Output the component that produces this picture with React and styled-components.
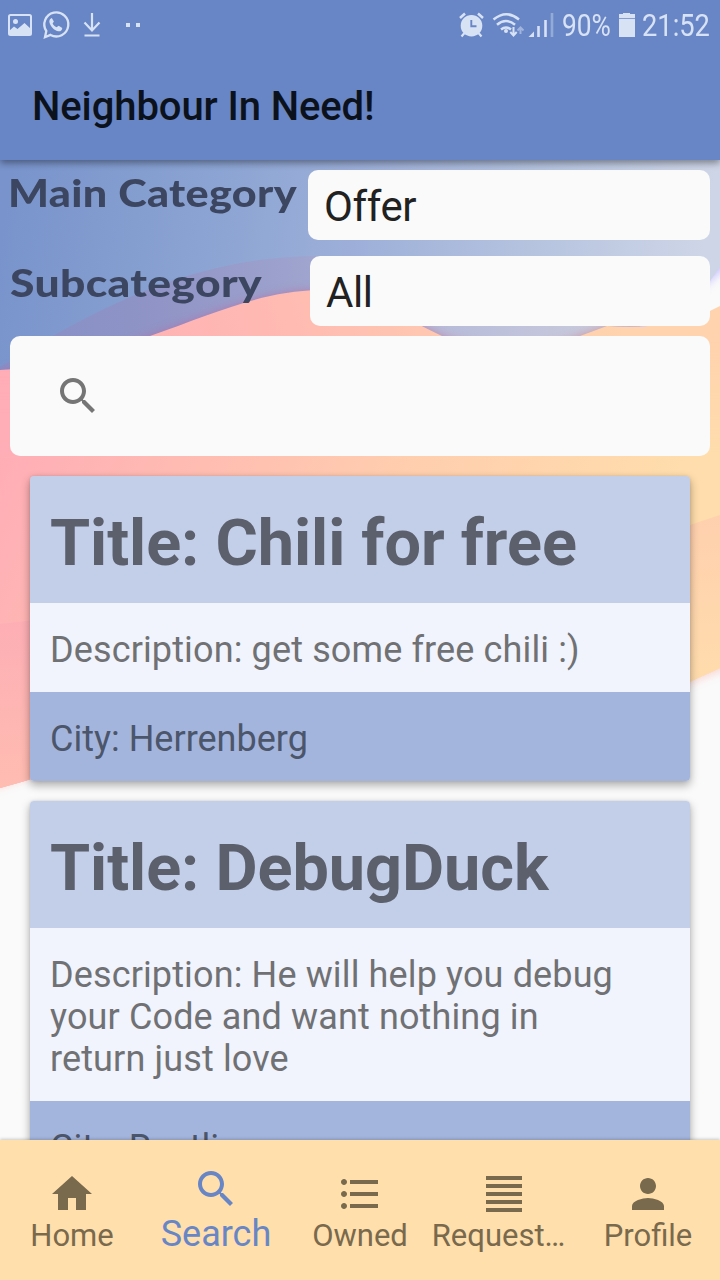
import React from 'react';
import styled, { createGlobalStyle } from 'styled-components';

const GlobalStyle = createGlobalStyle`
  * { box-sizing: border-box; }
  body { margin: 0; background: #fafafa; }
`;

const Screen = styled.div`
  width: 720px;
  height: 1280px;
  display: flex;
  flex-direction: column;
  overflow: hidden;
  background: #fafafa;
  font-family: Roboto, 'Noto Sans', sans-serif;
`;

const Header = styled.header`
  position: relative;
  z-index: 2;
  flex: none;
  height: 160px;
  background: #6886c5;
  box-shadow: 0 3px 7px rgba(0, 0, 0, 0.4);
`;

const StatusBar = styled.div`
  height: 50px;
  padding: 0 10px 0 6px;
  display: flex;
  justify-content: space-between;
  color: #d8e2f5;
`;

const StatusGroup = styled.div`
  display: flex;
  align-items: center;
`;

const StatusIcon = styled.svg`
  display: block;
  flex: none;
  width: ${(p) => p.$w}px;
  height: 50px;
`;

const StatusText = styled.span`
  width: ${(p) => p.$w}px;
  margin-left: ${(p) => p.$gap}px;
  padding-top: 2px;
  font-size: 31px;
  line-height: 52px;
  white-space: nowrap;

  span {
    display: inline-block;
    transform: scaleX(${(p) => p.$scale});
    transform-origin: left;
  }
`;

const AppTitle = styled.h1`
  margin: 0;
  padding: 27px 32px 0;
  font-size: 40px;
  line-height: 60px;
  font-weight: 500;
  letter-spacing: -0.1px;
  color: #0c121c;
`;

const Content = styled.main`
  position: relative;
  flex: none;
  height: 980px;
  overflow: hidden;
  padding-top: 10px;
`;

const Backdrop = styled.svg`
  position: absolute;
  inset: 0;
  width: 720px;
  height: 980px;
`;

const Filters = styled.div`
  position: relative;
  padding: 0 10px;
`;

const FilterRow = styled.div`
  display: flex;
  justify-content: space-between;
  height: 70px;
  margin-bottom: ${(p) => p.$after}px;
`;

const FilterLabel = styled.label`
  margin-left: ${(p) => p.$shift || 0}px;
  padding-top: ${(p) => p.$top}px;
  font-family: Lato, sans-serif;
  font-size: 37px;
  line-height: 44px;
  font-weight: 900;
  letter-spacing: 0.3px;
  white-space: nowrap;
  color: #3c4660;
  transform: scaleX(${(p) => p.$stretch});
  transform-origin: left;
`;

const Select = styled.div`
  flex: none;
  width: ${(p) => p.$w}px;
  height: 70px;
  padding: 0 16px;
  border-radius: 10px;
  background: #fafafa;
  font-size: 42px;
  line-height: 73px;
  letter-spacing: -0.4px;
  color: #212121;
`;

const SearchBox = styled.div`
  height: 120px;
  padding: 36px 44px;
  border-radius: 10px;
  background: #fafafa;
  color: #757575;
`;

const Icon = styled.svg`
  display: block;
  width: 48px;
  height: 48px;
  fill: currentColor;
`;

const CardList = styled.div`
  position: relative;
  display: flex;
  flex-direction: column;
  gap: 20px;
  padding: 20px 30px;
`;

const Card = styled.article`
  border-radius: 4px;
  box-shadow: 0 4px 10px rgba(0, 0, 0, 0.33), 0 0 3px rgba(0, 0, 0, 0.1);
`;

const CardTitle = styled.h2`
  margin: 0;
  height: 127px;
  padding: 16px 20px 0;
  border-radius: 4px 4px 0 0;
  background: #c3cee8;
  font-size: 64.8px;
  line-height: 103px;
  font-weight: 700;
  letter-spacing: -0.05px;
  white-space: nowrap;
  color: #5b606c;
`;

const CardText = styled.p`
  margin: 0;
  padding: 26px 60px 21px 20px;
  border-radius: ${(p) => (p.$city ? '0 0 4px 4px' : '0')};
  background: ${(p) => (p.$city ? '#a4b5dd' : '#f1f4fc')};
  font-size: 36px;
  line-height: 42px;
  letter-spacing: ${(p) => (p.$city ? 0 : 0.13)}px;
  color: ${(p) => (p.$city ? '#4c566b' : '#707174')};
`;

const TabBar = styled.nav`
  position: relative;
  z-index: 2;
  flex: none;
  display: grid;
  grid-template-columns: repeat(5, 144px);
  height: 140px;
  background: #ffdfac;
  box-shadow: 0 -1px 3px rgba(0, 0, 0, 0.2);
`;

const Tab = styled.a`
  display: flex;
  flex-direction: column;
  align-items: center;
  padding-top: ${(p) => (p.$active ? 25 : 30)}px;
  color: ${(p) => (p.$active ? '#6886c5' : '#79694d')};
`;

const TabLabel = styled.span`
  margin-top: ${(p) => (p.$active ? 3 : 0)}px;
  padding-right: ${(p) => p.$nudge || 0}px;
  font-size: ${(p) => (p.$active ? 36 : 31)}px;
  line-height: 36px;
  white-space: nowrap;
`;

const paths = {
  home: 'M10 20v-6h4v6h5v-8h3L12 3 2 12h3v8z',
  search:
    'M15.5 14h-.79l-.28-.27C15.41 12.59 16 11.11 16 9.5 16 5.91 13.09 3 9.5 3S3 5.91 3 9.5 5.91 16 9.5 16c1.61 0 3.09-.59 4.23-1.57l.27.28v.79l5 4.99L20.49 19l-4.99-5zm-6 0C7.01 14 5 11.99 5 9.5S7.01 5 9.5 5 14 7.01 14 9.5 11.99 14 9.5 14z',
  list: 'M4 10.5c-.83 0-1.5.67-1.5 1.5s.67 1.5 1.5 1.5 1.5-.67 1.5-1.5-.67-1.5-1.5-1.5zm0-6c-.83 0-1.5.67-1.5 1.5S3.17 7.5 4 7.5 5.5 6.83 5.5 6 4.83 4.5 4 4.5zm0 12c-.83 0-1.5.68-1.5 1.5s.68 1.5 1.5 1.5 1.5-.68 1.5-1.5-.67-1.5-1.5-1.5zM7 19h14v-2H7v2zm0-6h14v-2H7v2zm0-8v2h14V5H7z',
  lines: 'M3 21h18v-2H3v2zm0-4h18v-2H3v2zm0-4h18v-2H3v2zm0-4h18V7H3v2zm0-6v2h18V3H3z',
  person:
    'M12 12c2.21 0 4-1.79 4-4s-1.79-4-4-4-4 1.79-4 4 1.79 4 4 4zm0 2c-2.67 0-8 1.34-8 4v2h16v-2c0-2.66-5.33-4-8-4z',
};

const Glyph = ({ name }) => (
  <Icon viewBox="0 0 24 24">
    <path d={paths[name]} />
  </Icon>
);

const Notifications = () => (
  <StatusIcon $w={140} viewBox="6 0 140 50" fill="none" stroke="currentColor">
    <rect x="9" y="15" width="22" height="20" rx="1.5" strokeWidth="2" />
    <circle cx="15.5" cy="21.5" r="2.5" fill="currentColor" stroke="none" />
    <path d="M9 31l5-4.500 3.500 2.500 7-6 6.500 6v6H9z" fill="currentColor" stroke="none" />
    <path d="M45 37.200l1.300-6.200A12 12 0 1 1 50.500 34.900z" strokeWidth="2.300" />
    <path
      d="M51.800 18c-1.900.6-3 2.600-2.200 4.900 1.500 4.300 4.800 7.400 8.900 8.400 2 .4 4-1.500 3.700-3.400l-3.500-2.200-2.200 1.500c-1.800-.8-3-2-3.900-3.800l1.300-2z"
      fill="currentColor"
      stroke="none"
    />
    <path d="M92 13v17M84.500 22.500l7.500 8 7.500-8M84.500 35.500h15" strokeWidth="2.200" />
    <path d="M126 25h4M136 25h4" strokeWidth="4" />
  </StatusIcon>
);

const Alarm = () => (
  <StatusIcon $w={30} viewBox="457 0 30 50" fill="none" stroke="currentColor">
    <circle cx="471.500" cy="25.700" r="10.800" fill="currentColor" stroke="none" />
    <path d="M460 18l5-4.500M483 18l-5-4.500" strokeWidth="2.500" />
    <path d="M464.500 33l-3 3.500M478.500 33l3 3.500" strokeWidth="2.200" />
    <path d="M471.300 20v6.200h5.200" stroke="#6886c5" strokeWidth="1.900" />
  </StatusIcon>
);

const Signals = () => (
  <StatusIcon $w={66} viewBox="491 0 66 50" fill="none" stroke="currentColor">
    <path d="M493.500 19.500q13-10.500 25.500 0M497 24.800q9-7.500 18 0M501 29.500q5-4 10 0" strokeWidth="2.500" />
    <circle cx="506" cy="31" r="2" fill="currentColor" stroke="none" />
    <path d="M513.500 27v7.500M510.300 32l3.200 3.500 3.200-3.500" strokeWidth="2" />
    <path d="M520.500 34v-6.500M517.500 30.500l3-3 3 3" strokeWidth="2" opacity="0.5" />
    <path d="M528.500 37l5.500-5.500V37z" fill="currentColor" stroke="none" />
    <path d="M538.500 37V26M545.500 37V20" strokeWidth="2.600" />
    <path d="M552 37V13" strokeWidth="2.600" opacity="0.4" />
  </StatusIcon>
);

const Battery = () => (
  <StatusIcon $w={20} viewBox="617 0 20 50">
    <path d="M619 14h4v-1h7v1h5v4h-16zM619 19h16v18h-16z" fill="currentColor" />
    <path d="M619 17.500h16v1h-16z" fill="currentColor" opacity=".5" />
  </StatusIcon>
);

const band =
  'M0 370C70 366 105 352 150 336C215 313 262 291 320 290C360 291 405 318 442 336C490 352 530 354 580 336L607 326C650 330 690 322 720 306V668C620 714 490 750 340 710C210 700 110 759 0 788z';

const Waves = () => (
  <Backdrop viewBox="0 160 720 980" preserveAspectRatio="none">
    <defs>
      <linearGradient id="sky" gradientUnits="userSpaceOnUse" x1="0" y1="250" x2="690" y2="350">
        <stop offset="0" stopColor="#7994cc" />
        <stop offset="0.28" stopColor="#8aa3d2" />
        <stop offset="0.5" stopColor="#9dafd9" />
        <stop offset="0.75" stopColor="#b5c3df" />
        <stop offset="1" stopColor="#ced5e7" />
      </linearGradient>
      <linearGradient id="hill" gradientUnits="userSpaceOnUse" x1="0" y1="340" x2="640" y2="300">
        <stop offset="0" stopColor="#858fc6" />
        <stop offset="0.25" stopColor="#9094c6" />
        <stop offset="0.48" stopColor="#9ea4ce" />
        <stop offset="0.7" stopColor="#b8bcd9" />
        <stop offset="1" stopColor="#cdcedd" />
      </linearGradient>
      <linearGradient id="shade" gradientUnits="userSpaceOnUse" x1="0" y1="0" x2="640" y2="0">
        <stop offset="0" stopColor="#a56fb2" />
        <stop offset="0.5" stopColor="#b873a8" />
        <stop offset="1" stopColor="#d08e94" />
      </linearGradient>
      <linearGradient id="coral" gradientUnits="userSpaceOnUse" x1="60" y1="460" x2="600" y2="270">
        <stop offset="0" stopColor="#ffadb7" />
        <stop offset="0.45" stopColor="#ffbab2" />
        <stop offset="0.75" stopColor="#ffcbb0" />
        <stop offset="1" stopColor="#ffd3ae" />
      </linearGradient>
      <linearGradient id="sand" gradientUnits="userSpaceOnUse" x1="0" y1="450" x2="560" y2="720">
        <stop offset="0" stopColor="#ffadb6" />
        <stop offset="0.35" stopColor="#ffbfb1" />
        <stop offset="0.6" stopColor="#ffceae" />
        <stop offset="1" stopColor="#ffddac" />
      </linearGradient>
      <linearGradient id="fade" gradientUnits="userSpaceOnUse" x1="0" y1="340" x2="0" y2="460">
        <stop offset="0" stopColor="white" stopOpacity="0" />
        <stop offset="1" stopColor="white" />
      </linearGradient>
      <linearGradient id="lowLeft" x1="0" y1="0" x2="0" y2="1">
        <stop offset="0" stopColor="#fdaeb5" />
        <stop offset="1" stopColor="#ffbcb1" />
      </linearGradient>
      <linearGradient id="lowRight" x1="0" y1="0" x2="0" y2="1">
        <stop offset="0" stopColor="#ffd0ae" />
        <stop offset="1" stopColor="#ffddac" />
      </linearGradient>
      <filter id="soft" x="-20%" y="-20%" width="140%" height="140%">
        <feGaussianBlur stdDeviation="5" />
      </filter>
      <mask id="lower">
        <rect y="160" width="720" height="980" fill="url(#fade)" />
      </mask>
      <clipPath id="skyArea">
        <path d="M0 160H720V267L710 281L640 318V400H0z" />
      </clipPath>
    </defs>
    <rect y="160" width="720" height="980" fill="#fafafa" />
    <path d="M-20 140H740V254L710 281L600 370H-20z" fill="#b9b2ff" opacity="0.8" filter="url(#soft)" />
    <path d="M0 160H720V267L710 281L640 318V400H0z" fill="url(#sky)" />
    <g clipPath="url(#skyArea)">
      <path d="M0 367C80 320 180 256 320 256C430 256 560 290 650 300L640 380H0z" fill="url(#hill)" />
      <path d={band} fill="url(#shade)" opacity="0.75" filter="url(#soft)" />
    </g>
    <path d="M-20 786C110 752 210 690 340 700C490 740 620 710 740 656V600H-20z" fill="#f59a90" opacity=".4" filter="url(#soft)" transform="translate(0 6)" />
    <path d={band} fill="url(#coral)" />
    <path d={band} fill="url(#sand)" mask="url(#lower)" />
    <path d="M0 624L60 617V771L0 788z" fill="url(#lowLeft)" />
    <path d="M660 535L720 515V668L660 696z" fill="url(#lowRight)" />
  </Backdrop>
);

const cards = [
  { title: 'Chili for free', description: 'get some free chili :)', city: 'Herrenberg' },
  {
    title: 'DebugDuck',
    description: 'He will help you debug your Code and want nothing in return just love',
    city: 'Reutlingen',
  },
];

const tabs = [
  { label: 'Home', icon: 'home' },
  { label: 'Search', icon: 'search', active: true },
  { label: 'Owned', icon: 'list' },
  { label: 'Request…', icon: 'lines', nudge: 11 },
  { label: 'Profile', icon: 'person' },
];

export default function App() {
  return (
    <Screen>
      <GlobalStyle />
      <Header>
        <StatusBar>
          <StatusGroup>
            <Notifications />
          </StatusGroup>
          <StatusGroup>
            <Alarm />
            <StatusIcon $w={4} />
            <Signals />
            <StatusText $w={50} $gap={5} $scale={0.85}><span>90%</span></StatusText>
            <StatusIcon $w={5} />
            <Battery />
            <StatusText $w={68} $gap={5} $scale={0.88}><span>21:52</span></StatusText>
          </StatusGroup>
        </StatusBar>
        <AppTitle>Neighbour In Need!</AppTitle>
      </Header>
      <Content>
        <Waves />
        <Filters>
          <FilterRow $after={16}>
            <FilterLabel $top={1} $stretch={1.165} $shift={-2}>Main Category</FilterLabel>
            <Select $w={402}>Offer</Select>
          </FilterRow>
          <FilterRow $after={10}>
            <FilterLabel $top={5} $stretch={1.2}>Subcategory</FilterLabel>
            <Select $w={400}>All</Select>
          </FilterRow>
          <SearchBox>
            <Glyph name="search" />
          </SearchBox>
        </Filters>
        <CardList>
          {cards.map((card) => (
            <Card key={card.title}>
              <CardTitle>Title: {card.title}</CardTitle>
              <CardText>Description: {card.description}</CardText>
              <CardText $city>City: {card.city}</CardText>
            </Card>
          ))}
        </CardList>
      </Content>
      <TabBar>
        {tabs.map((tab) => (
          <Tab key={tab.label} $active={tab.active}>
            <Glyph name={tab.icon} />
            <TabLabel $active={tab.active} $nudge={tab.nudge}>{tab.label}</TabLabel>
          </Tab>
        ))}
      </TabBar>
    </Screen>
  );
}
